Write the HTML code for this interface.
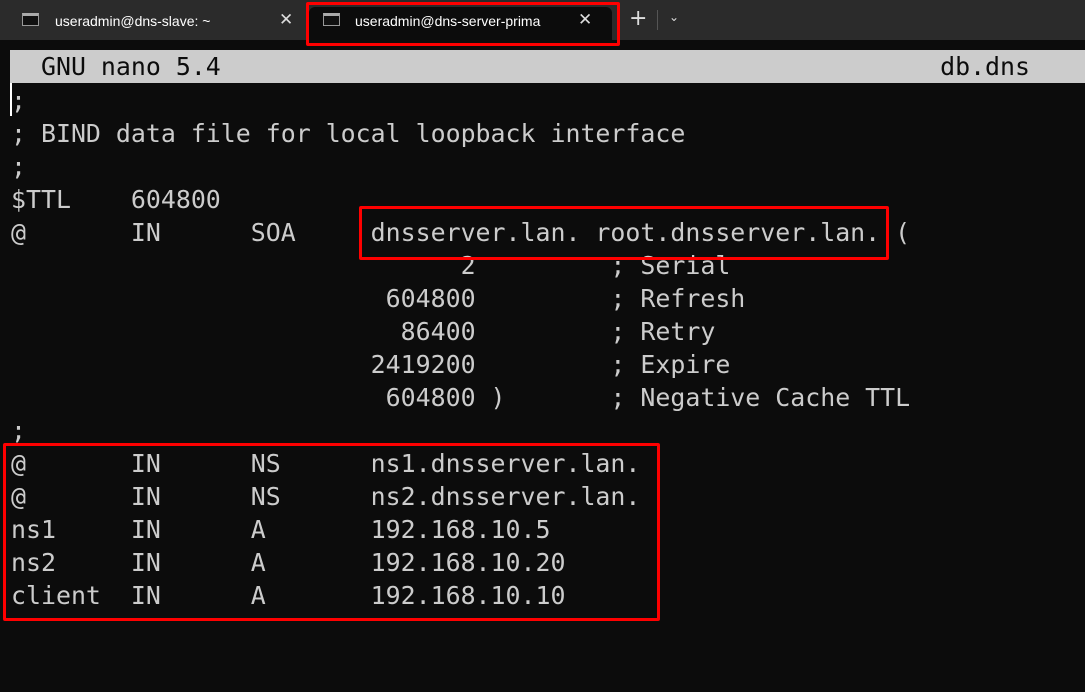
<!DOCTYPE html>
<html><head><meta charset="utf-8"><style>
*{margin:0;padding:0;box-sizing:border-box}
html,body{width:1085px;height:692px;overflow:hidden;background:#0c0c0c}
.tabbar{position:absolute;left:0;top:0;width:1085px;height:40px;background:#2b2b2b}
.tab{position:absolute;top:7px;height:33px;font:14px "Liberation Sans",sans-serif;color:#fff}
.icon{position:absolute;width:17px;height:13px;background:#111;border:1px solid #999;border-top:3px solid #aaa;top:13px}
.t{position:absolute;top:8px;white-space:nowrap}
.x{position:absolute;top:5px;font:17px "DejaVu Sans",sans-serif;color:#ddd}
.red{position:absolute;border:3px solid #ff0000;border-radius:2px}
pre{position:absolute;font:24.9px/33px "DejaVu Sans Mono","Liberation Mono",monospace;color:#cccccc;white-space:pre}
.hdr{position:absolute;left:10px;top:50px;width:1075px;height:33px;background:#cccccc}
.cur{position:absolute;left:10px;top:83px;width:2px;height:33px;background:#fff}
</style></head><body>
<div class="tabbar">
 <div class="icon" style="left:22px"></div>
 <div class="tab" style="left:55px"><span class="t" style="top:6px">useradmin@dns-slave: ~</span></div>
 <div class="x" style="left:279px;top:10px">✕</div>
 <div style="position:absolute;left:309px;top:7px;width:303px;height:33px;background:#0c0c0c;border-radius:6px 6px 0 0"></div>
 <div class="icon" style="left:323px"></div>
 <div class="tab" style="left:355px"><span class="t" style="top:6px">useradmin@dns-server-prima</span></div>
 <div class="x" style="left:578px;top:10px">✕</div>
 <div style="position:absolute;left:629px;top:6px;font:22px 'DejaVu Sans',sans-serif;color:#ddd">+</div>
 <div style="position:absolute;left:657px;top:10px;width:1px;height:20px;background:#555"></div>
 <div style="position:absolute;left:669px;top:10px;font:12px 'DejaVu Sans',sans-serif;color:#ddd">⌄</div>
</div>
<div class="red" style="left:306px;top:2px;width:314px;height:44px"></div>
<div class="hdr"></div>
<pre style="left:11px;top:50px;color:#0c0c0c">  GNU nano 5.4                                                db.dns</pre>
<div class="cur"></div>
<pre style="left:11px;top:84px">;
; BIND data file for local loopback interface
;
$TTL    604800
@       IN      SOA     dnsserver.lan. root.dnsserver.lan. (
                              2         ; Serial
                         604800         ; Refresh
                          86400         ; Retry
                        2419200         ; Expire
                         604800 )       ; Negative Cache TTL
;
@       IN      NS      ns1.dnsserver.lan.
@       IN      NS      ns2.dnsserver.lan.
ns1     IN      A       192.168.10.5
ns2     IN      A       192.168.10.20
client  IN      A       192.168.10.10</pre>
<div class="red" style="left:359px;top:206px;width:530px;height:54px"></div>
<div class="red" style="left:3px;top:443px;width:657px;height:178px"></div>
</body></html>
